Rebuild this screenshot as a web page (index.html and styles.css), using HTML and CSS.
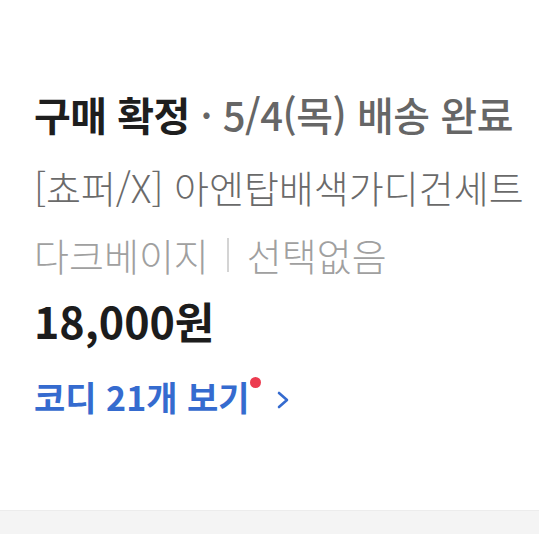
FILE: index.html
```html
<!DOCTYPE html>
<html lang="ko">
<head>
    <meta charset="UTF-8">
    <meta name="viewport" content="width=device-width, initial-scale=1.0">
    <title>주문 상세</title>
    <link rel="stylesheet" href="styles.css">
</head>
<body>

    <div class="order-card">
        <div class="order-status">
            <strong>구매 확정</strong><span class="status-sub"> · 5/4(목) 배송 완료</span>
        </div>
        <div class="product-name">[쵸퍼/X] 아엔탑배색가디건세트</div>
        <div class="product-option">
            다크베이지<span class="divider"></span>선택없음
        </div>
        <div class="product-price">18,000원</div>
        <a class="coordi-link" href="#">
            코디 21개 보기<span class="new-dot"></span>
            <svg class="chevron" width="16" height="18" viewBox="0 0 16 18">
                <path d="M4 2 L12 9 L4 16" fill="none" stroke="#356bcf" stroke-width="2.6" stroke-linecap="round" stroke-linejoin="round"/>
            </svg>
        </a>
    </div>

    <div class="section-gap"></div>

</body>
</html>
```

FILE: styles.css
```css
body {
    margin: 0;
    background-color: #fff;
    font-family: "Noto Sans CJK KR", "Noto Sans", sans-serif;
}
.order-card {
    padding: 89px 34px 0;
    box-sizing: border-box;
    height: 510px;
}
.order-status {
    font-size: 40px;
    line-height: 50px;
    letter-spacing: -0.5px;
    color: #1e1e1e;
    white-space: nowrap;
}
.order-status strong {
    font-weight: 700;
}
.status-sub {
    color: #666;
    font-weight: 500;
}
.product-name {
    margin-top: 23px;
    font-size: 38px;
    line-height: 50px;
    font-weight: 300;
    color: #6a6a6a;
    white-space: nowrap;
}
.product-option {
    margin-top: 18px;
    font-size: 38px;
    line-height: 50px;
    font-weight: 300;
    color: #a0a0a0;
    display: flex;
    align-items: center;
}
.divider {
    display: inline-block;
    width: 2px;
    height: 34px;
    background-color: #d4d4d4;
    margin: 0 18px;
}
.product-price {
    margin-top: 12px;
    font-size: 43px;
    line-height: 56px;
    font-weight: 700;
    color: #1c1c1c;
}
.coordi-link {
    margin-top: 26px;
    display: inline-flex;
    align-items: center;
    font-size: 34px;
    line-height: 46px;
    font-weight: 700;
    color: #356bcf;
    text-decoration: none;
}
/* new badge dot */
.new-dot {
    display: inline-block;
    width: 11px;
    height: 11px;
    border-radius: 50%;
    background-color: #ec3b4f;
    margin: 3px 14px 0 0;
    align-self: flex-start;
}
.chevron {
    margin-top: 6px;
}
.section-gap {
    height: 23px;
    background-color: #f4f4f4;
    border-top: 1px solid #ececec;
}
```
